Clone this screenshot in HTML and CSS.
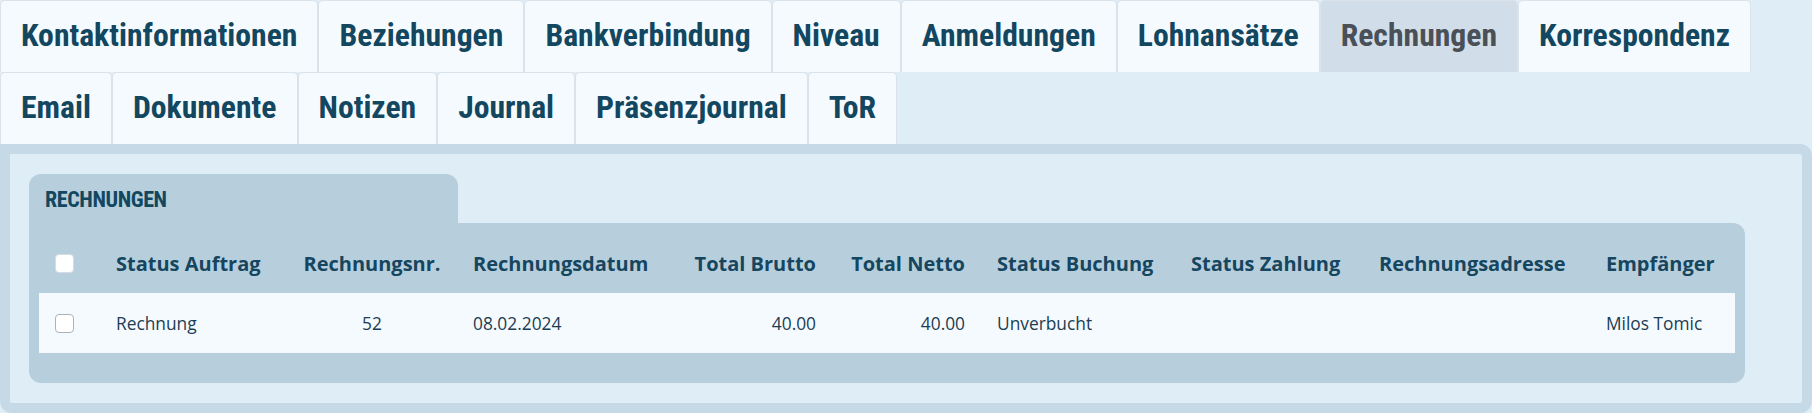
FILE: index.html
```html
<!DOCTYPE html>
<html>

<head>
    <meta charset="utf-8">
    <title>Rechnungen</title>
    <link rel="stylesheet" href="styles.css">
</head>

<body>
    <div id="app">
        <div class="tab-bar">
            <a class="tab">Kontaktinformationen</a>
            <a class="tab">Beziehungen</a>
            <a class="tab">Bankverbindung</a>
            <a class="tab">Niveau</a>
            <a class="tab">Anmeldungen</a>
            <a class="tab">Lohnansätze</a>
            <a class="tab tab-active">Rechnungen</a>
            <a class="tab">Korrespondenz</a>
            <a class="tab">Email</a>
            <a class="tab">Dokumente</a>
            <a class="tab">Notizen</a>
            <a class="tab">Journal</a>
            <a class="tab">Präsenzjournal</a>
            <a class="tab">ToR</a>
        </div>
        <div class="tab-panel">
            <div class="card">
                <div class="card-title">RECHNUNGEN</div>
                <div class="card-body">
                    <table class="grid">
                        <colgroup>
                            <col class="col-check">
                            <col class="col-auftrag">
                            <col class="col-nr">
                            <col class="col-datum">
                            <col class="col-brutto">
                            <col class="col-netto">
                            <col class="col-buchung">
                            <col class="col-zahlung">
                            <col class="col-adresse">
                            <col class="col-empf">
                        </colgroup>
                        <thead>
                            <tr>
                                <th><input class="check check-head" type="checkbox"></th>
                                <th>Status Auftrag</th>
                                <th class="center">Rechnungsnr.</th>
                                <th>Rechnungsdatum</th>
                                <th class="right">Total Brutto</th>
                                <th class="right">Total Netto</th>
                                <th>Status Buchung</th>
                                <th>Status Zahlung</th>
                                <th>Rechnungsadresse</th>
                                <th>Empfänger</th>
                            </tr>
                        </thead>
                        <tbody>
                            <tr>
                                <td><input class="check" type="checkbox"></td>
                                <td>Rechnung</td>
                                <td class="center">52</td>
                                <td>08.02.2024</td>
                                <td class="right">40.00</td>
                                <td class="right">40.00</td>
                                <td>Unverbucht</td>
                                <td></td>
                                <td></td>
                                <td>Milos Tomic</td>
                            </tr>
                        </tbody>
                    </table>
                </div>
            </div>
        </div>
    </div>
</body>

</html>
```

FILE: styles.css
```css
body {
    margin: 0;
    background-color: #dfedf6;
    font-family: "Open Sans", "Noto Sans", sans-serif;
}

.tab-bar {
    display: flex;
    flex-wrap: wrap;
}

.tab {
    box-sizing: border-box;
    height: 72px;
    padding: 0 20px;
    border: 1px solid #dbe2e9;
    border-bottom: none;
    border-radius: 5px 5px 0 0;
    background-color: #f5faff;
    color: #134760;
    font-family: "Roboto Condensed", "Noto Sans", sans-serif;
    font-stretch: condensed;
    font-weight: bold;
    font-size: 31.7px;
    line-height: 70px;
    white-space: nowrap;
    cursor: pointer;
}

.tab-active {
    background-color: #d1dee9;
    color: #4a5057;
}

.tab-panel {
    border: 10px solid #c5d9e6;
    border-radius: 0 12px 12px 12px;
    padding: 20px 19px;
    background-color: #dfedf6;
}

.card {
    width: fit-content;
}

.card-title {
    box-sizing: border-box;
    width: 429px;
    height: 49px;
    padding-left: 16px;
    border-radius: 12px 12px 0 0;
    background-color: #b7cfdc;
    color: #134760;
    font-family: "Roboto Condensed", "Noto Sans", sans-serif;
    font-stretch: condensed;
    font-weight: bold;
    font-size: 22px;
    letter-spacing: -0.4px;
    line-height: 51px;
}

.card-body {
    padding: 10px 10px 30px;
    border-radius: 0 12px 12px 12px;
    background-color: #b7cfdc;
}

.grid {
    table-layout: fixed;
    width: 1696px;
    border-collapse: collapse;
    font-size: 17.33px;
}

.grid th,
.grid td {
    height: 60px;
    padding: 0 16px;
    text-align: left;
    vertical-align: middle;
    white-space: nowrap;
}

.grid th {
    color: #16465f;
    font-weight: bold;
    font-size: 20px;
}

.grid td {
    color: #1c3d52;
    background-color: #f5faff;
}

.grid .center {
    text-align: center;
}

.grid .right {
    text-align: right;
}

.col-check { width: 61px; }
.col-auftrag { width: 187px; }
.col-nr { width: 170px; }
.col-datum { width: 215px; }
.col-brutto { width: 160px; }
.col-netto { width: 149px; }
.col-buchung { width: 194px; }
.col-zahlung { width: 188px; }
.col-adresse { width: 227px; }
.col-empf { width: 145px; }

.check {
    appearance: none;
    display: block;
    box-sizing: border-box;
    width: 19px;
    height: 19px;
    margin: 0;
    border: 1px solid #aab3bb;
    border-radius: 4px;
    background-color: #fff;
}

.check-head {
    border-color: #d6dde2;
}
```
